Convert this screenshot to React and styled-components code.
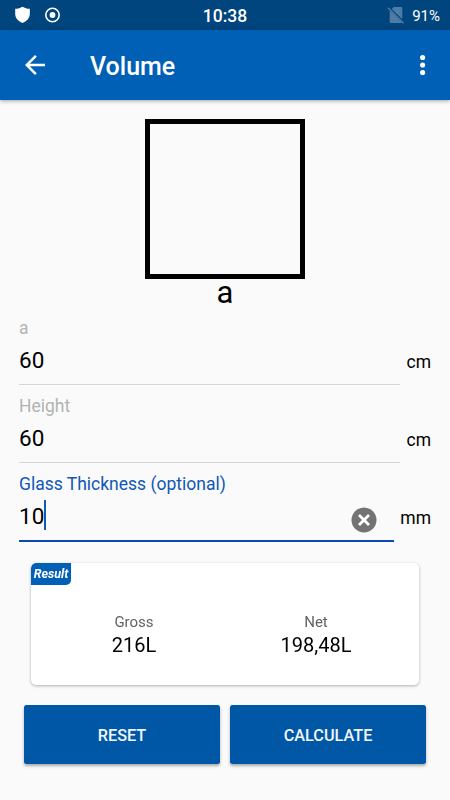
import React from "react";
import styled, { createGlobalStyle, ThemeProvider } from "styled-components";

const theme = {
  colors: {
    status: "#00457e",
    primary: "#0060b6",
    button: "#0057a6",
    accent: "#0d47b0",
    label: "#0f58b4",
    background: "#fafafa",
    hint: "#b3b3b3",
    line: "#d6d6d6",
  },
};

const GlobalStyle = createGlobalStyle`
  * {
    box-sizing: border-box;
  }
  body {
    margin: 0;
    background: #fafafa;
    font-family: Roboto, sans-serif;
  }
`;

const Screen = styled.div`
  display: flex;
  flex-direction: column;
  width: 450px;
  height: 800px;
  overflow: hidden;
  background: ${({ theme }) => theme.colors.background};
  color: #000;
`;

const StatusBar = styled.div`
  display: grid;
  grid-template-columns: 1fr auto 1fr;
  align-items: center;
  height: 30px;
  padding: 0 10px 0 14px;
  background: ${({ theme }) => theme.colors.status};
  color: #fff;
`;

const StatusGroup = styled.div`
  display: flex;
  align-items: center;
  gap: ${({ $gap }) => $gap}px;
  justify-content: ${({ $end }) => ($end ? "flex-end" : "flex-start")};
`;

const Clock = styled.div`
  margin-right: 4px;
  font-size: 17.5px;
  font-weight: 500;
  line-height: 20px;
  padding-top: 2px;
`;

const Battery = styled.div`
  font-size: 15px;
  line-height: 20px;
  padding-top: 2px;
`;

const Toolbar = styled.header`
  display: flex;
  align-items: center;
  flex: none;
  height: 70px;
  padding: 0 12px 0 20px;
  background: ${({ theme }) => theme.colors.primary};
  box-shadow: 0 1px 4px rgba(0, 0, 0, 0.35);
  color: #fff;
`;

const Title = styled.h1`
  flex: 1;
  margin: 3px 0 0 40px;
  font-size: 25px;
  font-weight: 500;
  line-height: 30px;
`;

const IconButton = styled.button`
  display: flex;
  padding: 0;
  border: 0;
  background: none;
  color: inherit;
`;

const Figure = styled.div`
  display: flex;
  flex-direction: column;
  align-items: center;
  height: 207px;
  padding-top: 19px;
`;

const Square = styled.div`
  flex: none;
  width: 160px;
  height: 160px;
  border: 5px solid #000;
`;

const SideName = styled.div`
  margin-top: -2px;
  font-size: 31px;
  line-height: 32px;
`;

const Row = styled.div`
  display: flex;
  gap: 6.5px;
  padding: 0 19px;
`;

const Field = styled.div`
  position: relative;
  flex: 1;
  height: ${({ $active }) => ($active ? 79 : 78)}px;
  padding-top: 11px;
  border-bottom: ${({ $active, theme }) =>
    $active
      ? `2px solid ${theme.colors.accent}`
      : `1px solid ${theme.colors.line}`};
`;

const Label = styled.div`
  color: ${({ $active, theme }) =>
    $active ? theme.colors.label : theme.colors.hint};
  font-size: 17.5px;
  line-height: 20px;
`;

const Value = styled.div`
  display: flex;
  align-items: center;
  margin-top: 9px;
  font-size: 22.5px;
  line-height: 26px;
`;

const Caret = styled.span`
  width: 2.5px;
  height: 30px;
  margin: -4px 0 -2px -0.5px;
  background: ${({ theme }) => theme.colors.label};
`;

const ClearButton = styled(IconButton)`
  position: absolute;
  right: 17px;
  bottom: 7px;
`;

const Unit = styled.div`
  padding-top: 45px;
  font-size: 17.5px;
  line-height: 20px;
`;

const Card = styled.section`
  height: 122px;
  margin: 21px 31px 0;
  border-radius: 5px;
  overflow: hidden;
  background: #fff;
`;

const CardShadow = styled.div`
  filter: drop-shadow(0 1.5px 1.5px rgba(0, 0, 0, 0.3));
`;

const Tag = styled.div`
  width: 40px;
  height: 22px;
  border-radius: 5px 0 5px 0;
  background: ${({ theme }) => theme.colors.primary};
  color: #fff;
  font-size: 12.5px;
  font-style: italic;
  font-weight: 700;
  line-height: 22px;
  text-align: center;
`;

const Results = styled.div`
  display: grid;
  grid-template-columns: 1fr 1fr;
  padding: 27px 12px 0;
  text-align: center;
`;

const ResultName = styled.div`
  color: #626262;
  font-size: 15px;
  line-height: 20px;
`;

const ResultValue = styled.div`
  font-size: 20px;
  line-height: 26px;
`;

const Actions = styled.div`
  display: flex;
  gap: 10px;
  padding: 20px 24px 0;
`;

const Button = styled.button`
  flex: 1;
  height: 59px;
  padding: 2px 0 0;
  border: 0;
  border-radius: 2.5px;
  background: ${({ theme }) => theme.colors.button};
  box-shadow: 0 2px 3px rgba(0, 0, 0, 0.32);
  color: #f2f6fb;
  font-family: inherit;
  font-size: 16.25px;
  font-weight: 500;
`;

const ShieldIcon = () => (
  <svg width="17" height="18" viewBox="0 0 17 18">
    <path
      d="M8.5 0.7 C6.5 2 4 2.7 1.2 2.8 V8 C1.2 12 4.5 15.5 8.5 17 C12.5 15.5 15.8 12 15.8 8 V2.8 C13 2.7 10.5 2 8.5 0.7Z"
      fill="#fff"
    />
  </svg>
);

const TargetIcon = () => (
  <svg width="16" height="16" viewBox="0 0 16 16">
    <circle cx="7.5" cy="8" r="6.7" fill="none" stroke="#fff" strokeWidth="1.6" />
    <circle cx="7.5" cy="8" r="2.9" fill="#fff" />
  </svg>
);

const NoSimIcon = () => (
  <svg width="18" height="18" viewBox="0 0 18 18">
    <path
      d="M6.6 1 H14 Q15.3 1 15.3 2.3 V13.2 L4.7 2.9Z M2.7 4.6 V15.7 Q2.7 17 4 17 H14 Q14.7 17 15.1 16.6Z"
      fill="#4d7ca5"
    />
    <path d="M1 1.8 L16.5 17.3" stroke="#4d7ca5" strokeWidth="1.4" />
  </svg>
);

const BackIcon = () => (
  <svg width="30" height="30" viewBox="0 0 24 24">
    <path
      d="M20 11H7.83l5.59-5.59L12 4l-8 8 8 8 1.41-1.41L7.83 13H20v-2z"
      fill="currentColor"
    />
  </svg>
);

const MoreIcon = () => (
  <svg width="30" height="30" viewBox="0 0 24 24" fill="currentColor">
    <circle cx="11.7" cy="6" r="2.05" />
    <circle cx="11.7" cy="12" r="2.05" />
    <circle cx="11.7" cy="18" r="2.05" />
  </svg>
);

const ClearIcon = () => (
  <svg width="26" height="26" viewBox="0 0 26 26">
    <circle cx="13" cy="13" r="12.5" fill="#737373" />
    <path
      d="M8 8 L18 18 M18 8 L8 18"
      stroke="#fff"
      strokeWidth="2.8"
    />
  </svg>
);

const Input = ({ label, value, unit, active }) => (
  <Row>
    <Field $active={active}>
      <Label $active={active}>{label}</Label>
      <Value>
        {value}
        {active && <Caret />}
      </Value>
      {active && (
        <ClearButton aria-label="Clear">
          <ClearIcon />
        </ClearButton>
      )}
    </Field>
    <Unit>{unit}</Unit>
  </Row>
);

const Result = ({ name, value }) => (
  <div>
    <ResultName>{name}</ResultName>
    <ResultValue>{value}</ResultValue>
  </div>
);

const App = () => (
  <ThemeProvider theme={theme}>
    <GlobalStyle />
    <Screen>
      <StatusBar>
        <StatusGroup $gap={14}>
          <ShieldIcon />
          <TargetIcon />
        </StatusGroup>
        <Clock>10:38</Clock>
        <StatusGroup $gap={7} $end>
          <NoSimIcon />
          <Battery>91%</Battery>
        </StatusGroup>
      </StatusBar>
      <Toolbar>
        <IconButton aria-label="Back">
          <BackIcon />
        </IconButton>
        <Title>Volume</Title>
        <IconButton aria-label="More">
          <MoreIcon />
        </IconButton>
      </Toolbar>
      <Figure>
        <Square />
        <SideName>a</SideName>
      </Figure>
      <Input label="a" value="60" unit="cm" />
      <Input label="Height" value="60" unit="cm" />
      <Input label="Glass Thickness (optional)" value="10" unit="mm" active />
      <CardShadow>
        <Card>
          <Tag>Result</Tag>
          <Results>
            <Result name="Gross" value="216L" />
            <Result name="Net" value="198,48L" />
          </Results>
        </Card>
      </CardShadow>
      <Actions>
        <Button>RESET</Button>
        <Button>CALCULATE</Button>
      </Actions>
    </Screen>
  </ThemeProvider>
);

export default App;
